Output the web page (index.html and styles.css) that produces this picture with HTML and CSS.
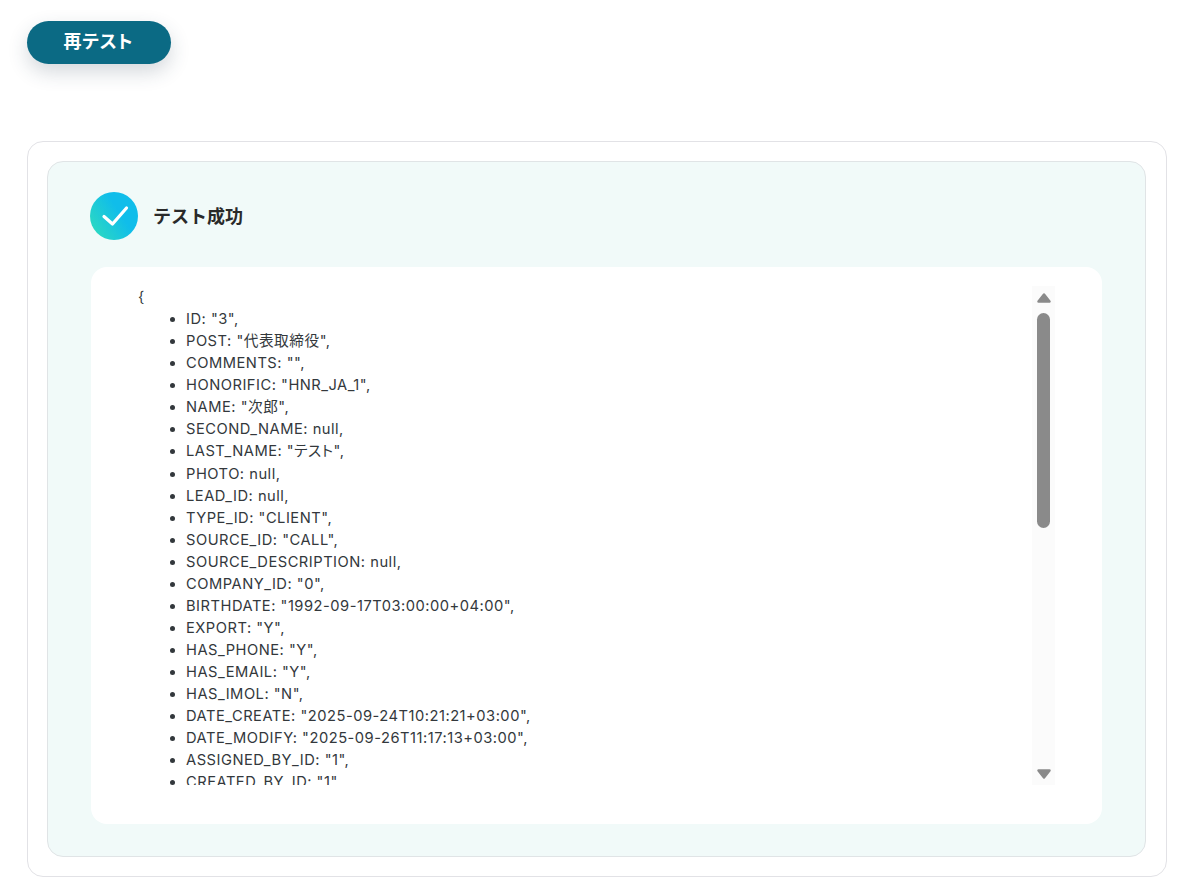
FILE: index.html
```html
<!DOCTYPE html>
<html lang="ja">
<head>
<meta charset="utf-8">
<title>テスト成功</title>
<link rel="stylesheet" href="styles.css">
</head>
<body>
<button class="retest">再テスト</button>
<section class="outer">
  <div class="panel">
    <header class="status">
      <svg class="check" width="48" height="48" viewBox="0 0 48 48">
        <defs><linearGradient id="g" x1="0" y1="1" x2="1" y2="0.35"><stop offset="0.05" stop-color="#2fdcbd"/><stop offset="0.7" stop-color="#10bdea"/></linearGradient></defs>
        <circle cx="24" cy="24" r="24" fill="url(#g)"/>
        <path d="M14 24.5 L22.5 32 L36.5 16" fill="none" stroke="#fff" stroke-width="3.2" stroke-linecap="round" stroke-linejoin="round"/>
      </svg>
      <h2>テスト成功</h2>
    </header>
    <div class="result">
      <div class="scroll">
        <div class="brace">{</div>
        <ul>
          <li>ID: "3",</li>
          <li>POST: "代表取締役",</li>
          <li>COMMENTS: "",</li>
          <li>HONORIFIC: "HNR_JA_1",</li>
          <li>NAME: "次郎",</li>
          <li>SECOND_NAME: null,</li>
          <li>LAST_NAME: "テスト",</li>
          <li>PHOTO: null,</li>
          <li>LEAD_ID: null,</li>
          <li>TYPE_ID: "CLIENT",</li>
          <li>SOURCE_ID: "CALL",</li>
          <li>SOURCE_DESCRIPTION: null,</li>
          <li>COMPANY_ID: "0",</li>
          <li>BIRTHDATE: "1992-09-17T03:00:00+04:00",</li>
          <li>EXPORT: "Y",</li>
          <li>HAS_PHONE: "Y",</li>
          <li>HAS_EMAIL: "Y",</li>
          <li>HAS_IMOL: "N",</li>
          <li>DATE_CREATE: "2025-09-24T10:21:21+03:00",</li>
          <li>DATE_MODIFY: "2025-09-26T11:17:13+03:00",</li>
          <li>ASSIGNED_BY_ID: "1",</li>
          <li>CREATED_BY_ID: "1"</li>
        </ul>
      </div>
      <div class="track">
        <svg class="arrow" width="16" height="12" viewBox="0 0 16 12"><path d="M8 2.5 L13.5 9.5 H2.5 Z" fill="#8a8a8a" stroke="#8a8a8a" stroke-width="2.5" stroke-linejoin="round"/></svg>
        <div class="rail"><div class="thumb"></div></div>
        <svg class="arrow" width="16" height="12" viewBox="0 0 16 12"><path d="M2.5 2.5 H13.5 L8 9.5 Z" fill="#8a8a8a" stroke="#8a8a8a" stroke-width="2.5" stroke-linejoin="round"/></svg>
      </div>
    </div>
  </div>
</section>
</body>
</html>
```
FILE: styles.css
```css
* { box-sizing: border-box; }
html, body { margin: 0; height: 100%; background: #fff; overflow: hidden; }
body {
  padding: 21px 23px 0 27px;
  font-family: Inter, "Noto Sans CJK JP", sans-serif;
  color: #283239;
}
.retest {
  display: block;
  width: 144px;
  height: 43px;
  border: 0;
  border-radius: 22px;
  background: #0b6a84;
  color: #fff;
  font: 700 18px/41px Inter, "Noto Sans CJK JP", sans-serif;
  font-feature-settings: "palt";
  letter-spacing: 0.8px;
  padding: 0 1px 3px 0;
  box-shadow: 0 8px 20px rgba(40, 60, 80, 0.2);
}
.outer {
  margin-top: 77px;
  height: 736px;
  padding: 19px 20px 19px 19px;
  border: 1px solid #e2e2e6;
  border-radius: 16px;
  background: #fff;
}
.panel {
  height: 100%;
  padding: 30px 43px 32px 42px;
  border: 1px solid #e0e4e6;
  border-radius: 16px;
  background: #f1faf9;
}
.status {
  display: flex;
  align-items: center;
  gap: 15px;
  height: 48px;
  margin-bottom: 27px;
}
.check { flex: none; }
.status h2 {
  margin: 0;
  padding-top: 2px;
  font-size: 18px;
  font-weight: 700;
  line-height: 48px;
  color: #2a2a2a;
}
.result {
  display: flex;
  align-items: flex-start;
  height: 557px;
  margin-left: 1px;
  padding: 19px 47px 0 47px;
  background: #fff;
  border-radius: 16px;
}
.scroll {
  flex: 1;
  height: 499px;
  overflow: hidden;
  font-size: 14.7px;
  line-height: 22.05px;
  letter-spacing: 0.5px;
  font-feature-settings: "palt";
  color: #33383c;
}
.brace { height: 22.2px; }
.scroll ul { margin: 0; padding: 0 0 0 48px; }
.scroll li { padding-left: 0; }
.track {
  flex: none;
  width: 23px;
  height: 499px;
  display: flex;
  flex-direction: column;
  align-items: center;
  background: #fbfbfb;
  padding-top: 6px;
}
.arrow { flex: none; }
.rail { flex: 1; width: 13px; padding-top: 9px; }
.thumb { height: 215px; background: #8a8a8a; border-radius: 7px; }
.track .arrow:last-child { margin-bottom: 5px; }
```
